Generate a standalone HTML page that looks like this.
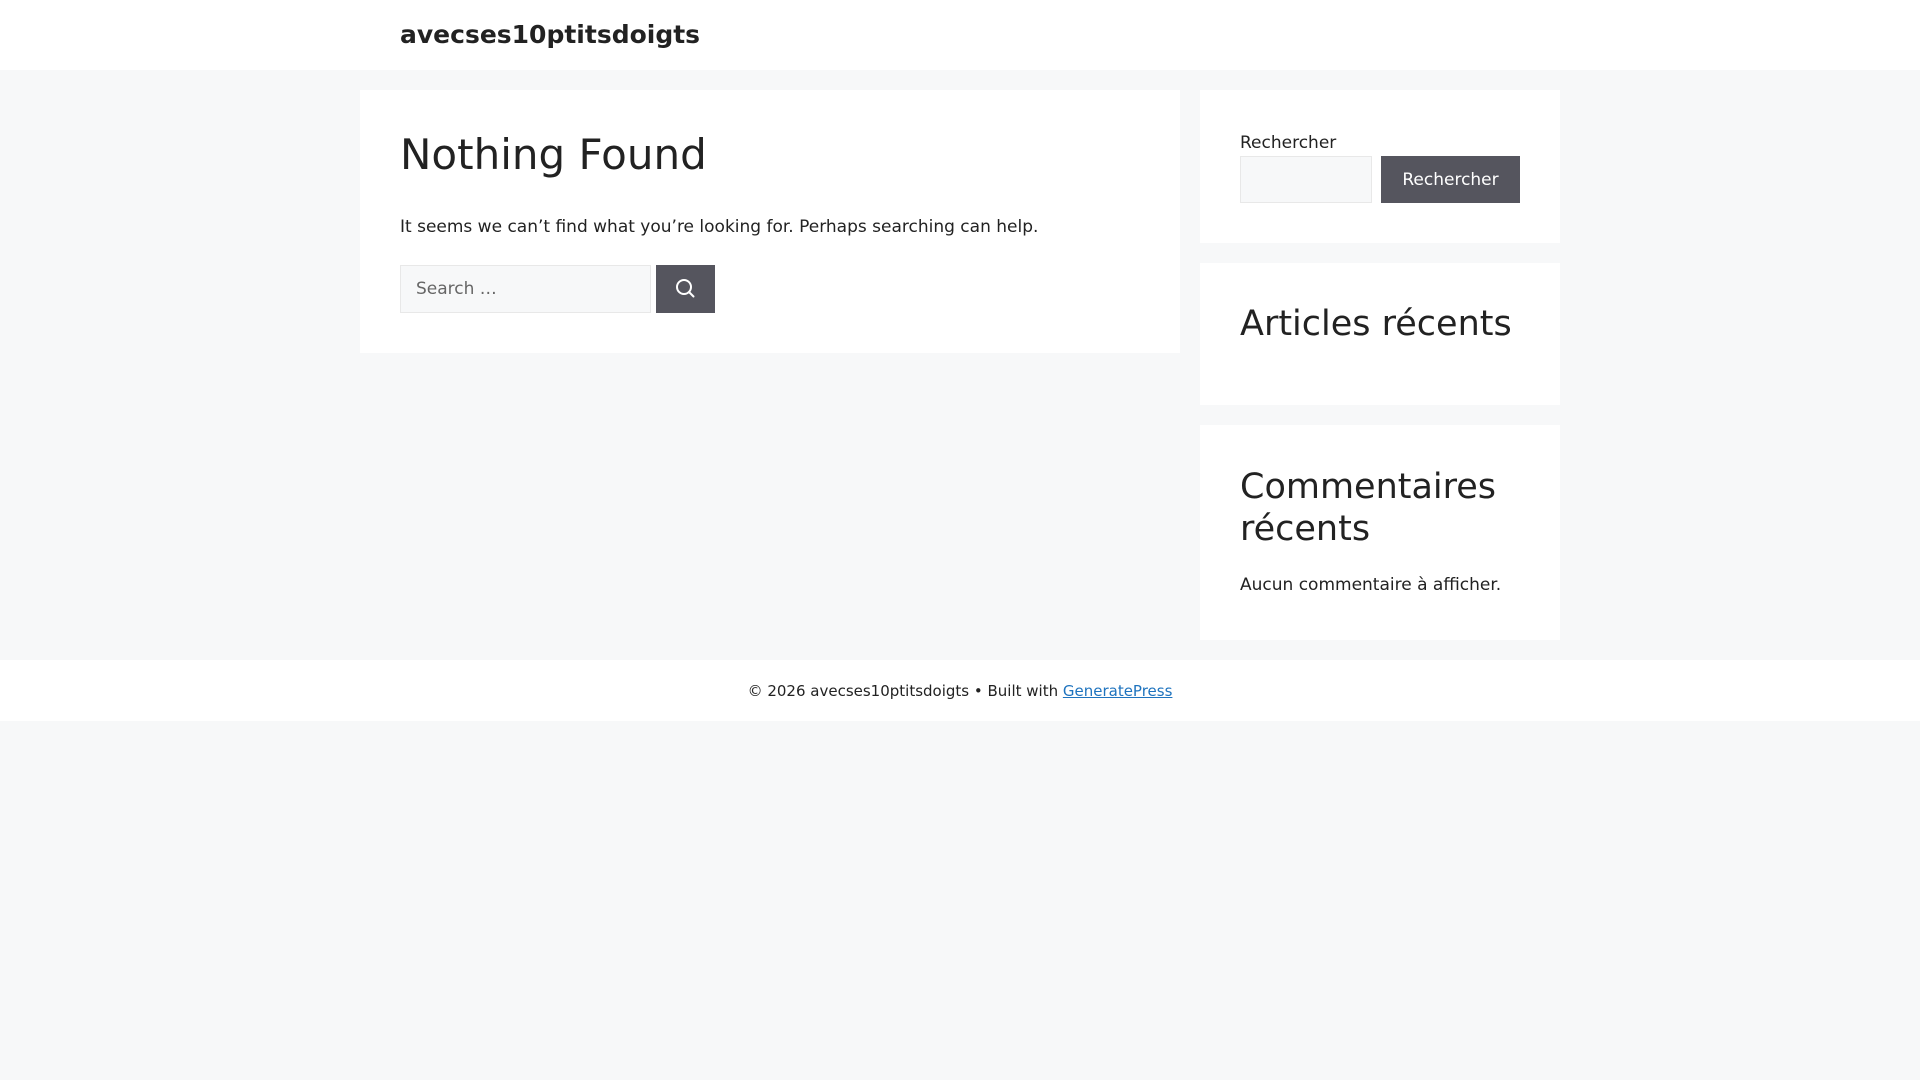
<!DOCTYPE html>
<html><head><meta charset="utf-8"><style>
*{margin:0;padding:0;box-sizing:border-box}
body{width:1920px;height:1080px;background:#f7f8f9;font-family:"DejaVu Sans","Liberation Sans",sans-serif;color:#222;position:relative;overflow:hidden}
.a{position:absolute;white-space:nowrap}
.box{position:absolute;background:#fff}
</style></head><body>
<div class="box" style="left:0;top:0;width:1920px;height:70px"></div>
<div class="a" style="left:400px;top:20px;font-size:25px;line-height:30px;font-weight:bold;color:#222">avecses10ptitsdoigts</div>

<div class="box" style="left:360px;top:90px;width:820px;height:263px"></div>
<div class="a" style="left:400px;top:130px;font-size:42px;line-height:50px">Nothing Found</div>
<div class="a" style="left:400px;top:214px;font-size:17px;line-height:26px">It seems we can’t find what you’re looking for. Perhaps searching can help.</div>
<div class="a" style="left:400px;top:265px;width:251px;height:48px;background:#f7f8f9;border:1px solid #e8e8e8;font-size:17px;line-height:46px;padding-left:15px;color:#666">Search …</div>
<div class="a" style="left:656px;top:265px;width:59px;height:48px;background:#55555e">
<svg width="59" height="48" viewBox="0 0 59 48"><circle cx="28" cy="22" r="7" fill="none" stroke="#fff" stroke-width="2"/><line x1="33" y1="27" x2="37.5" y2="31.5" stroke="#fff" stroke-width="2" stroke-linecap="round"/></svg></div>

<div class="box" style="left:1200px;top:90px;width:360px;height:153px"></div>
<div class="a" style="left:1240px;top:130px;font-size:17px;line-height:26px">Rechercher</div>
<div class="a" style="left:1240px;top:156px;width:132px;height:47px;background:#f7f8f9;border:1px solid #e8e8e8"></div>
<div class="a" style="left:1381px;top:156px;width:139px;height:47px;background:#55555e;color:#fff;font-size:17px;line-height:49px;text-align:center">Rechercher</div>

<div class="box" style="left:1200px;top:263px;width:360px;height:142px"></div>
<div class="a" style="left:1240px;top:303px;font-size:35px;line-height:42px">Articles récents</div>

<div class="box" style="left:1200px;top:425px;width:360px;height:215px"></div>
<div class="a" style="left:1240px;top:466px;font-size:35px;line-height:42px">Commentaires<br>récents</div>
<div class="a" style="left:1240px;top:572px;font-size:17px;line-height:26px">Aucun commentaire à afficher.</div>

<div class="box" style="left:0;top:660px;width:1920px;height:61px"></div>
<div class="a" style="left:0;width:1920px;top:680px;font-size:15px;line-height:22px;text-align:center">© 2026 avecses10ptitsdoigts • Built with <span style="color:#1e73be;text-decoration:underline">GeneratePress</span></div>
</body></html>
